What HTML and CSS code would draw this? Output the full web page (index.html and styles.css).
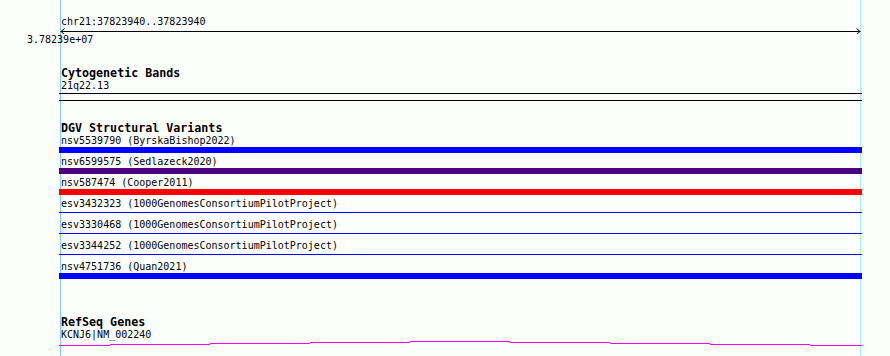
FILE: index.html
```html
<!DOCTYPE html>
<html lang="en">
<head>
    <meta charset="UTF-8">
    <title>Genome Browser - chr21:37823940</title>
    <link rel="stylesheet" href="styles.css">
</head>
<body>

    <div class="browser">

        <!-- Ruler -->
        <div class="ruler">
            <div class="locus">chr21:37823940..37823940</div>
            <svg class="axis" width="801" height="6" viewBox="0 0 801 6">
                <path d="M0.5 3.5H800.5 M4.5 0.5L1 3.5L4.5 6.5 M796.5 0.5L800 3.5L796.5 6.5" fill="none" stroke="#000" stroke-width="1"/>
            </svg>
            <div class="tick">3.78239e+07</div>
        </div>

        <!-- Cytogenetic Bands -->
        <section class="track">
            <h2 class="track-title">Cytogenetic Bands</h2>
            <div class="label">21q22.13</div>
            <div class="band"></div>
        </section>

        <!-- DGV Structural Variants -->
        <section class="track">
            <h2 class="track-title">DGV Structural Variants</h2>
            <div class="variant">
                <div class="label">nsv5539790 (ByrskaBishop2022)</div>
                <div class="bar bar-blue"></div>
            </div>
            <div class="variant">
                <div class="label">nsv6599575 (Sedlazeck2020)</div>
                <div class="bar bar-purple"></div>
            </div>
            <div class="variant">
                <div class="label">nsv587474 (Cooper2011)</div>
                <div class="bar bar-red"></div>
            </div>
            <div class="variant">
                <div class="label">esv3432323 (1000GenomesConsortiumPilotProject)</div>
                <div class="bar bar-thin"></div>
            </div>
            <div class="variant">
                <div class="label">esv3330468 (1000GenomesConsortiumPilotProject)</div>
                <div class="bar bar-thin"></div>
            </div>
            <div class="variant">
                <div class="label">esv3344252 (1000GenomesConsortiumPilotProject)</div>
                <div class="bar bar-thin"></div>
            </div>
            <div class="variant">
                <div class="label">nsv4751736 (Quan2021)</div>
                <div class="bar bar-blue"></div>
            </div>
        </section>

        <!-- RefSeq Genes -->
        <section class="track genes">
            <h2 class="track-title">RefSeq Genes</h2>
            <div class="label">KCNJ6|NM_002240</div>
            <svg class="intron" width="803" height="5" viewBox="0 0 803 5">
                <path d="M0 4.5H51 M51 3.5H151 M151 2.5H251 M251 1.5H351 M351 0.5H451 M451 1.5H551 M551 2.5H651 M651 3.5H751 M751 4.5H803" fill="none" stroke="#ff00ff" stroke-width="1"/>
            </svg>
        </section>

    </div>

</body>
</html>
```

FILE: styles.css
```css
/* Global Styles */
body {
    margin: 0;
    padding: 0;
    background-color: #fdfffd;
    color: #000;
    font-family: "DejaVu Sans Mono", "Liberation Mono", monospace;
    font-size: 10px;
}

.browser {
    margin-left: 60px;
    width: 799px;
    height: 356px;
    border-left: 1px solid #87cefa;
    border-right: 1px solid #afeeee;
}

/* Ruler */
.ruler {
    padding-top: 16px;
}

.locus,
.tick,
.label {
    line-height: 12px;
    white-space: nowrap;
}

.axis {
    display: block;
    margin-left: -1px;
}

.tick {
    margin-left: -34px;
}

/* Tracks */
.track {
    margin-top: 21px;
}

.track-title {
    margin: 0;
    font-size: 11.67px;
    font-weight: bold;
    line-height: 13px;
}

.band {
    margin: 1px -2px 0 -2px;
    height: 6px;
    border-top: 1px solid #000;
    border-bottom: 1px solid #000;
}

.variant {
    padding-bottom: 3px;
}

.bar {
    margin: 0 -2px;
    height: 6px;
}

.bar-blue {
    background-color: #0000ff;
}

.bar-purple {
    background-color: #4b0082;
}

.bar-red {
    background-color: #ff0000;
}

.bar-thin {
    height: 1px;
    margin-top: 2px;
    margin-bottom: 3px;
    background-color: #0000ff;
}

.genes {
    margin-top: 34px;
}

.intron {
    display: block;
    margin-left: -2px;
}
```
